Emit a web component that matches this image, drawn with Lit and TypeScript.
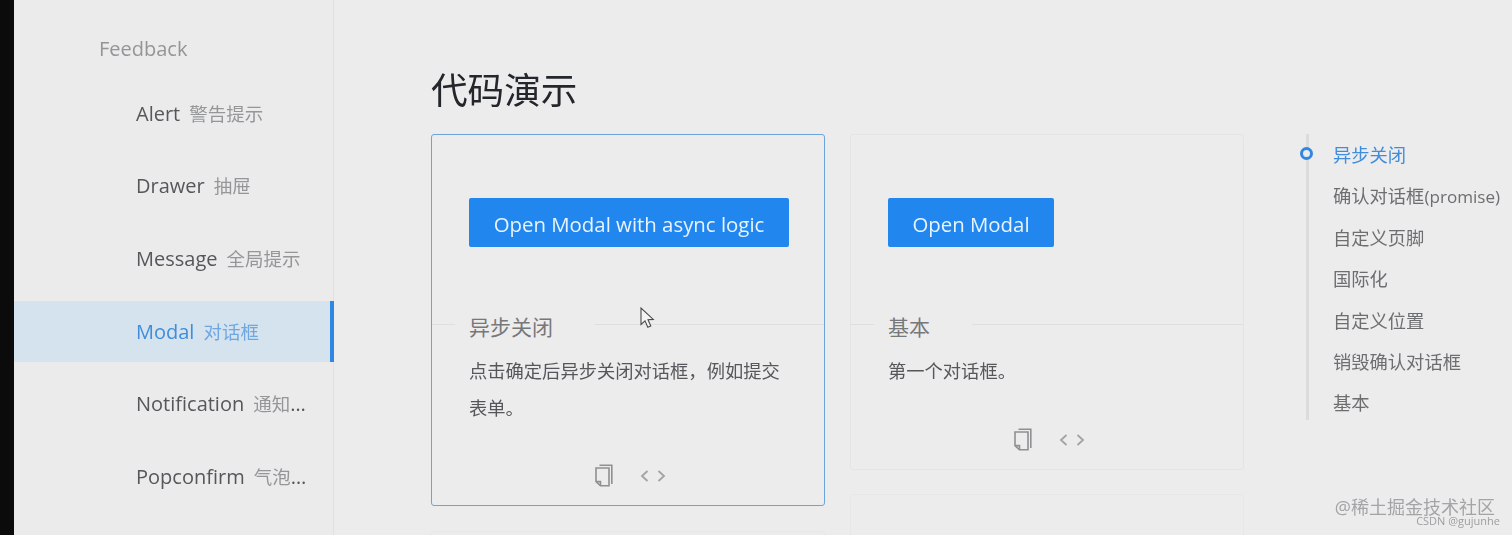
import { LitElement, html, css } from "lit";
import { customElement } from "lit/decorators.js";

const NAV = [
  { en: "Alert", zh: "警告提示" },
  { en: "Drawer", zh: "抽屉" },
  { en: "Message", zh: "全局提示" },
  { en: "Modal", zh: "对话框", active: true },
  { en: "Notification", zh: "通知提醒框" },
  { en: "Popconfirm", zh: "气泡确认框" },
];

const actions = html`<div class="actions">
  <svg width="18" height="23" viewBox="0 0 18 23" fill="none" stroke="#8f9091" stroke-width="1.6">
    <path d="M4.500 1.200H16.800V20" />
    <path d="M1 4H14V21.800H5.500L1 17.600Z" />
    <path d="M1 17.600H5.500V21.800" />
  </svg>
  <svg width="26" height="14" viewBox="0 0 26 14" fill="none" stroke="#a2a3a4" stroke-width="1.8">
    <path d="M7.500 2 2 7l5.500 5" />
    <path d="M18.500 2 24 7l-5.500 5" />
  </svg>
</div>`;

@customElement("app-root")
export class AppRoot extends LitElement {
  static styles = css`
    :host {
      display: block;
      width: 1512px;
      height: 535px;
      overflow: hidden;
      position: relative;
      background: #ececed;
      font-family: "Open Sans", "Noto Sans CJK SC", sans-serif;
    }
    .page {
      display: flex;
      height: 535px;
      overflow: hidden;
      filter: blur(0.35px);
    }
    .strip {
      flex: none;
      width: 14px;
      background: #0a0b0a;
    }
    .side {
      flex: none;
      width: 320px;
      box-sizing: border-box;
      border-right: 1px solid #e1e1e2;
      background: #ebebec;
    }
    .group {
      padding: 34px 0 0 85px;
      height: 30px;
      line-height: 30px;
      font-size: 20px;
      color: #949596;
    }
    .items {
      display: flex;
      flex-direction: column;
      padding-top: 18.600px;
    }
    .item {
      height: 61px;
      margin-bottom: 11.700px;
      padding: 1px 26px 0 122px;
      box-sizing: border-box;
      display: flex;
      align-items: center;
      position: relative;
      margin-right: -1px;
      font-size: 20px;
      color: #55575a;
      white-space: nowrap;
      line-height: 60px;
    }
    .item .text {
      display: block;
      overflow: hidden;
      text-overflow: ellipsis;
      width: 100%;
    }
    .zh {
      margin-left: 9px;
      font-size: 18.500px;
      color: #959697;
    }
    .item.active {
      background: #d5e3ef;
      color: #3f8ddb;
    }
    .item.active .zh {
      color: #6fa7e0;
    }
    .item.active::after {
      content: "";
      position: absolute;
      right: 0;
      top: 0;
      bottom: 0;
      width: 4px;
      background: #2f86e3;
    }
    .main {
      flex: none;
      width: 813px;
      padding-left: 97px;
    }
    h2 {
      margin: 0;
      padding-top: 64px;
      height: 134px;
      box-sizing: border-box;
      font-size: 36.600px;
      line-height: 52px;
      font-weight: 400;
      color: #23262b;
    }
    .cols {
      display: flex;
      gap: 25px;
      align-items: flex-start;
    }
    .col {
      width: 394px;
      display: flex;
      flex-direction: column;
    }
    .card {
      box-sizing: border-box;
      border: 1px solid #e4e4e5;
      border-radius: 3px;
      position: relative;
    }
    .card.focus {
      border-color: #6da3d8;
      height: 372px;
      margin-bottom: 25px;
    }
    .card.base {
      height: 336px;
      margin-bottom: 24px;
    }
    .card.stub {
      height: 80px;
      border-color: #e7e7e8;
    }
    .preview {
      padding: 63px 37px 0;
      height: 189px;
      box-sizing: border-box;
    }
    button {
      display: block;
      height: 49px;
      padding: 2px 0 0;
      border: 0;
      border-radius: 2px;
      background: #2187ee;
      color: #e8f3fd;
      font: inherit;
      font-size: 20.400px;
    }
    .w-async {
      width: 320px;
    }
    .w-base {
      width: 166px;
    }
    .title-row {
      height: 0;
      border-top: 1px solid #dfdfe0;
      position: relative;
    }
    .title {
      position: absolute;
      left: 23px;
      top: -15px;
      padding: 0 42px 0 14px;
      background: #ececed;
      font-size: 21px;
      line-height: 34px;
      color: #77787a;
    }
    .desc {
      margin: 0;
      padding: 27px 37px 0;
      font-size: 18.300px;
      line-height: 37px;
      color: #55575a;
    }
    .actions {
      position: absolute;
      left: 0;
      right: 0;
      bottom: 18px;
      padding-left: 5px;
      display: flex;
      justify-content: center;
      align-items: center;
      gap: 27px;
    }
    .toc {
      position: absolute;
      left: 1306px;
      top: 134px;
    }
    .toc-list {
      list-style: none;
      margin: 0;
      padding: 0 0 0 24px;
      border-left: 3px solid #dcdcdd;
      height: 286px;
      box-sizing: border-box;
      width: 206px;
      position: relative;
    }
    .toc-list li {
      height: 41.400px;
      line-height: 41.400px;
      font-size: 18.300px;
      color: #6d6e70;
      white-space: nowrap;
    }
    .toc-list li.on {
      color: #3f8ddb;
    }
    .latin {
      font-size: 17.100px;
    }
    .dot {
      position: absolute;
      left: -9px;
      top: 13px;
      width: 13px;
      height: 13px;
      box-sizing: border-box;
      border: 3px solid #2f86e3;
      border-radius: 50%;
      background: #ececed;
    }
    .mark {
      position: absolute;
      right: 17px;
      top: 497px;
      font-size: 18px;
      line-height: 20px;
      color: #a3a4a5;
      white-space: nowrap;
    }
    .csdn {
      position: absolute;
      right: 12px;
      top: 515px;
      font-size: 11px;
      line-height: 12px;
      color: #9d9e9f;
      white-space: nowrap;
    }
    .cursor {
      position: absolute;
      left: 640px;
      top: 307px;
    }
  `;

  render() {
    return html`<div class="page">
      <div class="strip"></div>
      <aside class="side">
        <div class="group">Feedback</div>
        <div class="items">
          ${NAV.map(
            (n) => html`<div class="item ${n.active ? "active" : ""}">
              <span class="text">${n.en}<span class="zh">${n.zh}</span></span>
            </div>`
          )}
        </div>
      </aside>
      <main class="main">
        <h2>代码演示</h2>
        <div class="cols">
          <div class="col">
            <section class="card focus">
              <div class="preview"><button class="w-async">Open Modal with async logic</button></div>
              <div class="title-row"><span class="title">异步关闭</span></div>
              <p class="desc">点击确定后异步关闭对话框，例如提交表单。</p>
              ${actions}
            </section>
            <section class="card stub"></section>
          </div>
          <div class="col">
            <section class="card base">
              <div class="preview"><button class="w-base">Open Modal</button></div>
              <div class="title-row"><span class="title">基本</span></div>
              <p class="desc">第一个对话框。</p>
              ${actions}
            </section>
            <section class="card stub"></section>
          </div>
        </div>
      </main>
      <nav class="toc">
        <ul class="toc-list">
          <span class="dot"></span>
          <li class="on">异步关闭</li>
          <li>确认对话框<span class="latin">(promise)</span></li>
          <li>自定义页脚</li>
          <li>国际化</li>
          <li>自定义位置</li>
          <li>销毁确认对话框</li>
          <li>基本</li>
        </ul>
      </nav>
      <div class="mark">@稀土掘金技术社区</div>
      <div class="csdn">CSDN @gujunhe</div>
      <svg class="cursor" width="16" height="23" viewBox="0 0 16 23" fill="#f4f4f4" stroke="#4a4b4d" stroke-width="1.100">
        <path d="M1 1v16.500l4-3.600 2.800 6.300 3-1.300-2.800-6.200 5.300-.3Z" />
      </svg>
    </div>`;
  }
}
